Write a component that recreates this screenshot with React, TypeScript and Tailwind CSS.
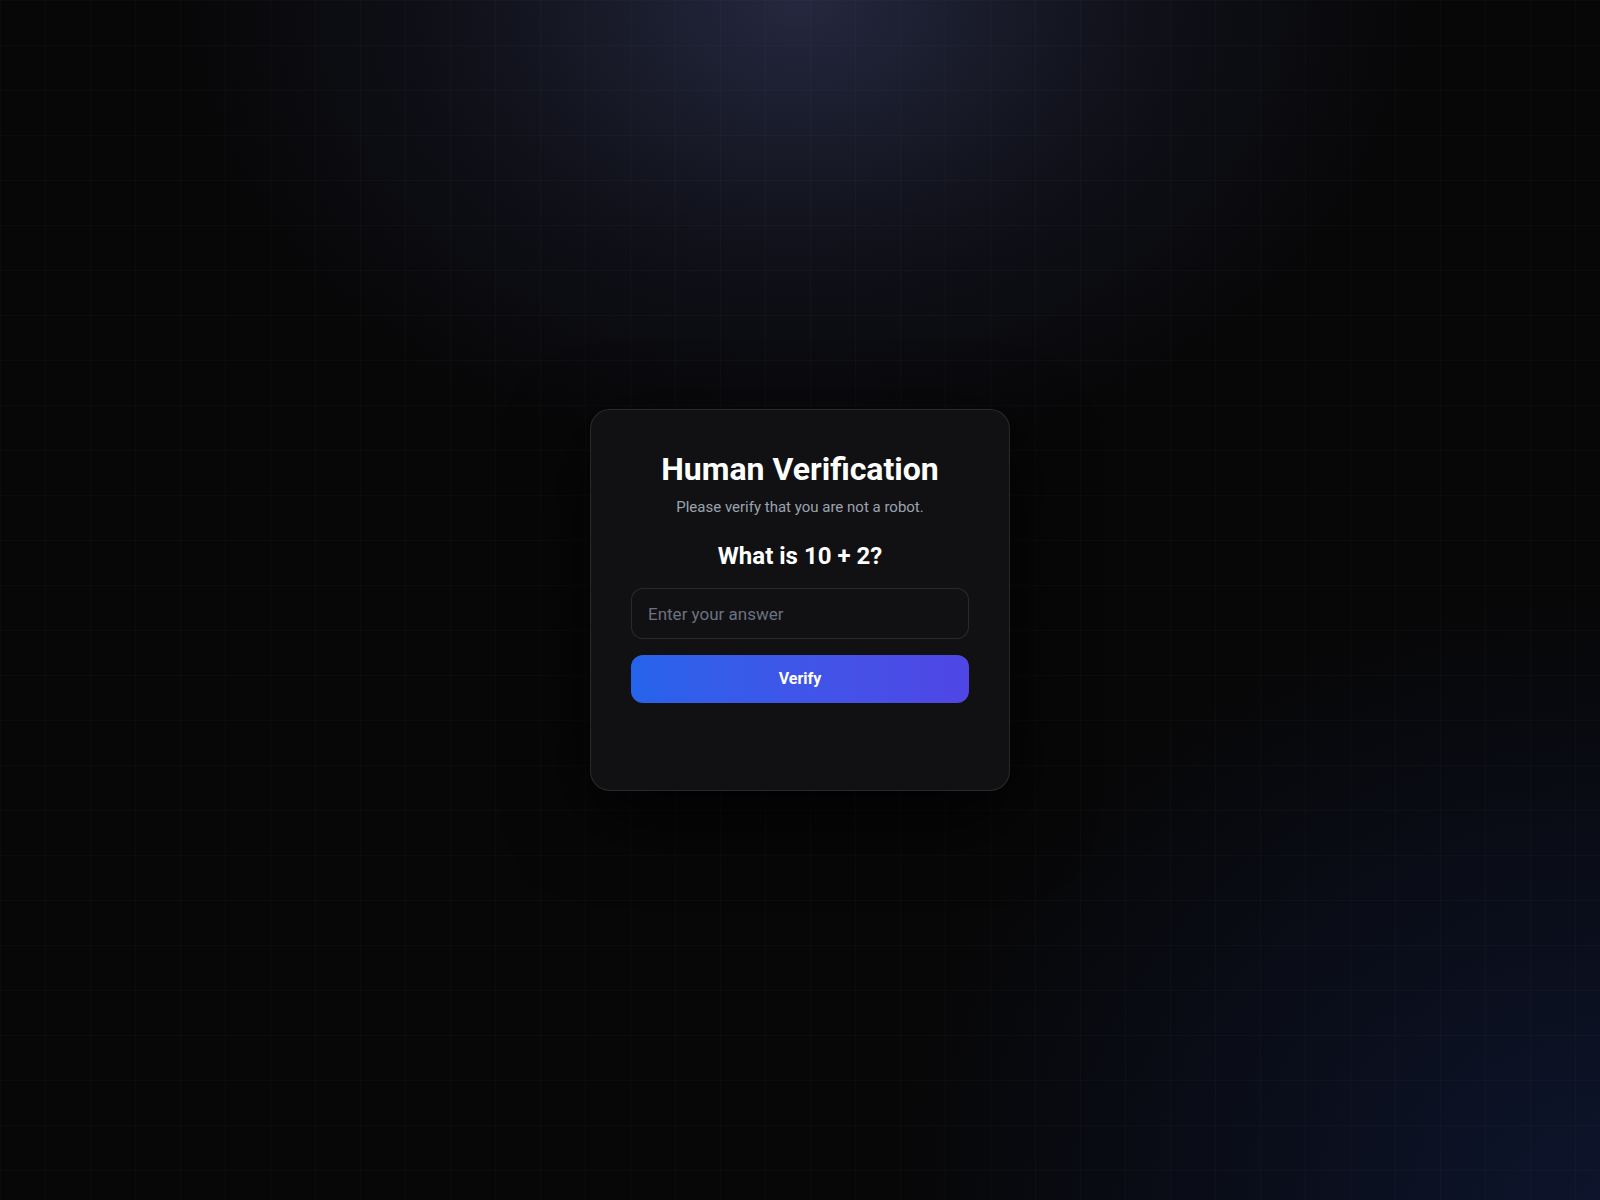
import { useState } from 'react';

export default function App() {
  const [answer, setAnswer] = useState('');

  return (
    <div className="relative flex min-h-screen w-full items-center justify-center overflow-hidden bg-[#070708] font-['Roboto','Liberation_Sans',sans-serif]">
      {/* glow + grid background */}
      <div className="pointer-events-none absolute inset-0 bg-[radial-gradient(ellipse_620px_460px_at_50%_0%,rgba(38,42,66,0.95),rgba(24,26,42,0.5)_55%,transparent_100%)]" />
      <div className="pointer-events-none absolute inset-0 bg-[radial-gradient(ellipse_700px_600px_at_100%_100%,rgba(14,22,48,0.9),transparent_100%)]" />
      <div className="pointer-events-none absolute inset-0 bg-[linear-gradient(rgba(255,255,255,0.02)_1px,transparent_1px),linear-gradient(90deg,rgba(255,255,255,0.02)_1px,transparent_1px)] bg-[size:45px_45px]" />

      <div className="relative w-[420px] rounded-[20px] border border-white/10 bg-[#111113] p-10 text-center shadow-[0_25px_80px_rgba(0,0,0,0.85)]">
        <h1 className="text-[32px] font-bold leading-[38px] text-white">Human Verification</h1>
        <p className="mt-2 text-[15px] text-[#9ca3af]">Please verify that you are not a robot.</p>

        <h2 className="mt-[22px] text-2xl font-bold text-white">What is 10 + 2?</h2>

        <input
          type="text"
          value={answer}
          onChange={(e) => setAnswer(e.target.value)}
          placeholder="Enter your answer"
          className="mt-4 h-[51px] w-full rounded-xl border border-white/10 bg-[#111113] px-4 text-[17px] text-white outline-none placeholder:text-[#6b7280]"
        />

        <button className="mt-4 h-12 w-full rounded-xl bg-gradient-to-r from-[#2563eb] to-[#4f46e5] text-base font-bold text-white">
          Verify
        </button>

        {/* result message slot */}
        <div className="mt-4 h-[31px]" />
      </div>
    </div>
  );
}
